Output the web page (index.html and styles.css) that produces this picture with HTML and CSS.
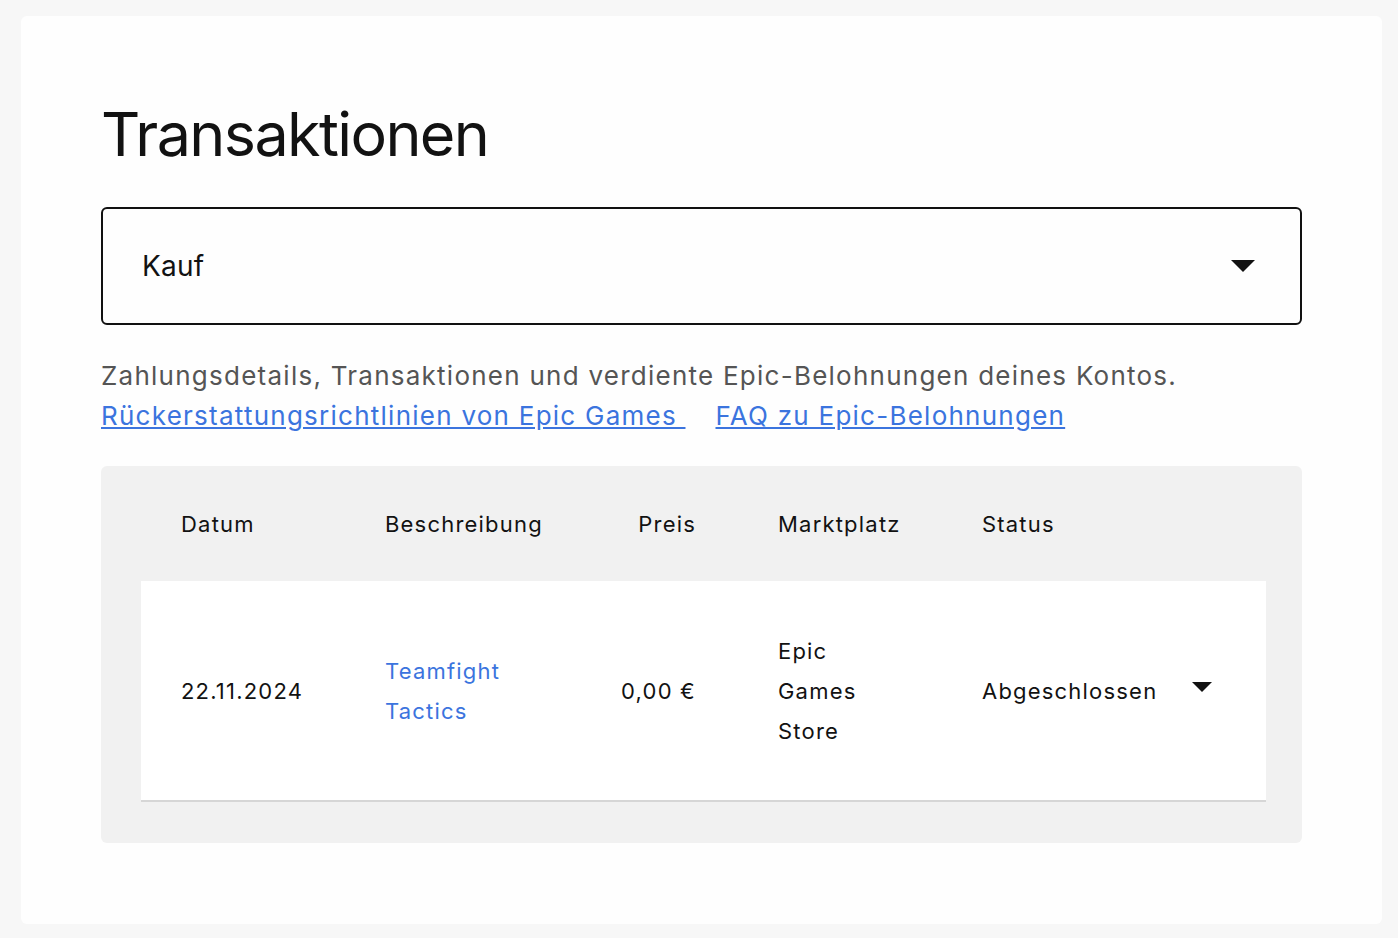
FILE: index.html
```html
<!DOCTYPE html>
<html lang="de">
<head>
    <meta charset="UTF-8">
    <meta name="viewport" content="width=device-width, initial-scale=1.0">
    <title>Transaktionen</title>
    <link rel="stylesheet" href="styles.css">
</head>
<body>
    <div class="card">
        <h1>Transaktionen</h1>

        <div class="select-box">
            <span>Kauf</span>
            <svg class="caret" width="24" height="12" viewBox="0 0 24 12"><path d="M0 0h24L12 12z" fill="#111"/></svg>
        </div>

        <p class="intro">Zahlungsdetails, Transaktionen und verdiente Epic-Belohnungen deines Kontos.</p>
        <div class="links">
            <a href="#">Rückerstattungsrichtlinien von Epic Games&nbsp;</a>
            <a href="#">FAQ zu Epic-Belohnungen</a>
        </div>

        <div class="table">
            <div class="table-head">
                <div class="cell">Datum</div>
                <div class="cell">Beschreibung</div>
                <div class="cell price">Preis</div>
                <div class="cell market">Marktplatz</div>
                <div class="cell">Status</div>
                <div class="cell toggle"></div>
            </div>
            <div class="table-row">
                <div class="cell">22.11.2024</div>
                <div class="cell"><a href="#">Teamfight Tactics</a></div>
                <div class="cell price">0,00 €</div>
                <div class="cell market">Epic Games Store</div>
                <div class="cell">Abgeschlossen</div>
                <div class="cell toggle">
                    <svg width="20" height="10" viewBox="0 0 20 10"><path d="M0 0h20L10 10z" fill="#111"/></svg>
                </div>
            </div>
        </div>
    </div>
</body>
</html>
```

FILE: styles.css
```css
body {
    font-family: Inter, "Noto Sans", sans-serif;
    margin: 0;
    padding: 16px 16px 15px 21px;
    background-color: #f7f7f7;
    color: #121212;
}
.card {
    background: #fefefe;
    border-radius: 6px;
    padding: 80px 80px 81px 80px;
}
h1 {
    font-size: 61px;
    font-weight: 400;
    line-height: 76px;
    margin: 0 0 35px 0;
    letter-spacing: -1.6px;
}
.select-box {
    height: 114px;
    border: 2px solid #111;
    border-radius: 6px;
    display: flex;
    align-items: center;
    justify-content: space-between;
    padding: 0 45px 0 39px;
    font-size: 28px;
    letter-spacing: 0.2px;
}
.intro {
    margin: 31px 0 0 0;
    font-size: 26px;
    line-height: 40px;
    letter-spacing: 1.25px;
    color: #555;
}
.links {
    display: flex;
    gap: 30px;
    font-size: 26px;
    line-height: 40px;
    letter-spacing: 1.25px;
}
a {
    color: #3b74de;
}
.table {
    margin-top: 30px;
    background: #f1f1f1;
    border-radius: 6px;
    padding: 0 36px 41px 40px;
    font-size: 22px;
    letter-spacing: 1.2px;
}
.table-head,
.table-row {
    display: grid;
    grid-template-columns: 204px 200px 191px 206px minmax(0, 1fr) 114px;
    align-items: center;
}
.table-head {
    height: 115px;
}
.table-row {
    background: #fff;
    height: 219px;
    border-bottom: 2px solid #d6d6d6;
    line-height: 40px;
}
.cell {
    padding-left: 40px;
    padding-right: 40px;
}
.cell.price {
    text-align: right;
}
.cell.market {
    padding-left: 42px;
    padding-right: 64px;
}
.table-row a {
    text-decoration: none;
}
.cell.toggle {
    padding-right: 54px;
    display: flex;
    align-items: center;
    margin-top: -8px;
}
```
